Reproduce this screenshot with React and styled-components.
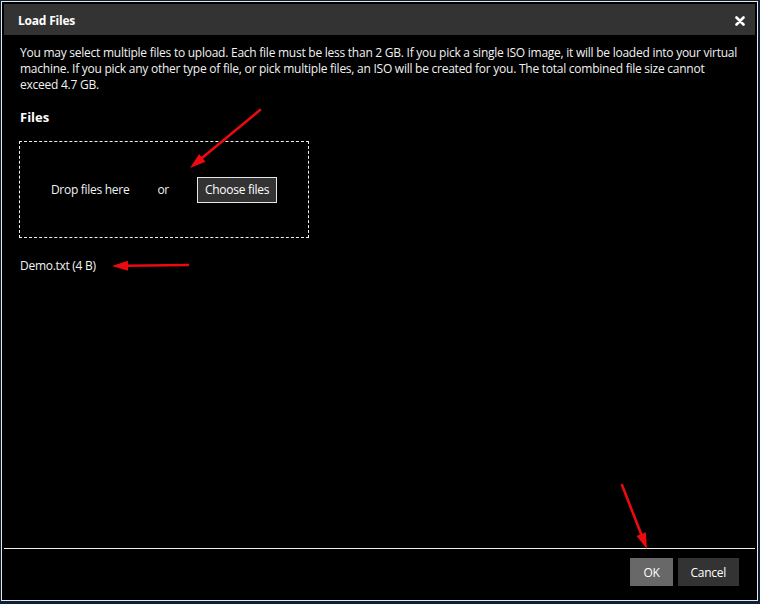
import React from "react";
import styled, { createGlobalStyle } from "styled-components";

const Global = createGlobalStyle`
  html, body { margin: 0; padding: 0; background: #0c2136; }
  body { font-family: "Open Sans", "Noto Sans", sans-serif; color: #f2f2f2; }
  #root { width: 760px; height: 604px; padding-top: 1px; padding-left: 1px; box-sizing: border-box; }
`;

const Dialog = styled.div`
  position: relative;
  width: 757px;
  height: 600px;
  box-sizing: border-box;
  border: 1px solid #e8e8e8;
  padding: 2px;
  background: #000;
  display: flex;
  flex-direction: column;
`;

const Header = styled.div`
  height: 31px;
  flex: none;
  box-sizing: border-box;
  background: #333333;
  display: flex;
  align-items: center;
  justify-content: space-between;
  padding: 2px 9px 0 14px;
`;

const Title = styled.div`
  font-size: 12px;
  font-weight: 700;
  color: #fff;
  letter-spacing: -0.2px;
`;

const Close = styled.button`
  border: 0;
  background: none;
  padding: 0;
  width: 12px;
  height: 12px;
  display: flex;
  align-items: center;
  justify-content: center;
`;

const Content = styled.div`
  flex: 1;
  padding: 10px 15px 0 16px;
`;

const Intro = styled.p`
  margin: 0;
  width: 720px;
  font-size: 12px;
  line-height: 16px;
  letter-spacing: -0.25px;
`;

const SectionTitle = styled.h3`
  margin: 15px 0 0;
  font-size: 13px;
  line-height: 18px;
  font-weight: 700;
  color: #fff;
`;

const DropZone = styled.div`
  margin: 15px 0 0 -1px;
  width: 290px;
  height: 97px;
  box-sizing: border-box;
  border: 1px dashed #f0f0f0;
  display: flex;
  align-items: center;
  justify-content: center;
  gap: 28px;
  font-size: 12px;
  letter-spacing: -0.28px;
`;

const Button = styled.button`
  font-family: inherit;
  font-size: 12px;
  letter-spacing: -0.28px;
  color: #fff;
  background: ${(p) => (p.$primary ? "#686868" : "#333333")};
  border: ${(p) => (p.$outlined ? "1px solid #e6e6e6" : "0")};
  height: ${(p) => (p.$outlined ? "26px" : "28px")};
  padding: 0 ${(p) => (p.$outlined ? "7px" : "13px")};
  box-sizing: border-box;
  cursor: pointer;
`;

const FileItem = styled.div`
  margin-top: 20px;
  font-size: 12px;
  line-height: 16px;
  letter-spacing: -0.28px;
`;

const Footer = styled.div`
  flex: none;
  border-top: 1px solid #f0f0f0;
  height: 50px;
  box-sizing: border-box;
  display: flex;
  justify-content: flex-end;
  align-items: flex-start;
  gap: 5px;
  padding: 9px 16px 0 0;
`;

const Overlay = styled.svg`
  position: absolute;
  left: -2px;
  top: -2px;
  width: 760px;
  height: 604px;
  pointer-events: none;
`;

function Arrow({ x1, y1, x2, y2 }) {
  const dx = x2 - x1;
  const dy = y2 - y1;
  const len = Math.hypot(dx, dy);
  const ux = dx / len;
  const uy = dy / len;
  const hl = 16;
  const hw = 5;
  const bx = x2 - ux * hl;
  const by = y2 - uy * hl;
  const px = -uy;
  const py = ux;
  const pts = `${x2},${y2} ${bx + px * hw},${by + py * hw} ${bx - px * hw},${by - py * hw}`;
  return (
    <g>
      <line x1={x1} y1={y1} x2={bx + ux * 2} y2={by + uy * 2} stroke="#ea0a0f" strokeWidth="2.6" strokeLinecap="round" />
      <polygon points={pts} fill="#ea0a0f" />
    </g>
  );
}

export default function App() {
  return (
    <>
      <Global />
      <Dialog>
        <Header>
          <Title>Load Files</Title>
          <Close aria-label="Close">
            <svg width="10" height="10" viewBox="0 0 10 10">
              <path d="M1.5 1.5 L8.5 8.5 M8.5 1.5 L1.5 8.5" stroke="#fff" strokeWidth="2.6" strokeLinecap="round" />
            </svg>
          </Close>
        </Header>
        <Content>
          <Intro>
            You may select multiple files to upload. Each file must be less than 2 GB. If you pick a single ISO image, it will be loaded into your virtual machine. If you pick any other type of file, or pick multiple files, an ISO will be created for you. The total combined file size cannot exceed 4.7 GB.
          </Intro>
          <SectionTitle>Files</SectionTitle>
          <DropZone>
            <span>Drop files here</span>
            <span>or</span>
            <Button $outlined>Choose files</Button>
          </DropZone>
          <FileItem>Demo.txt (4 B)</FileItem>
        </Content>
        <Footer>
          <Button $primary>OK</Button>
          <Button>Cancel</Button>
        </Footer>
        <Overlay viewBox="0 0 760 604">
          <Arrow x1={260} y1={110} x2={190} y2={168} />
          <Arrow x1={188} y1={265} x2={112} y2={266} />
          <Arrow x1={622} y1={485} x2={647} y2={549} />
        </Overlay>
      </Dialog>
    </>
  );
}
